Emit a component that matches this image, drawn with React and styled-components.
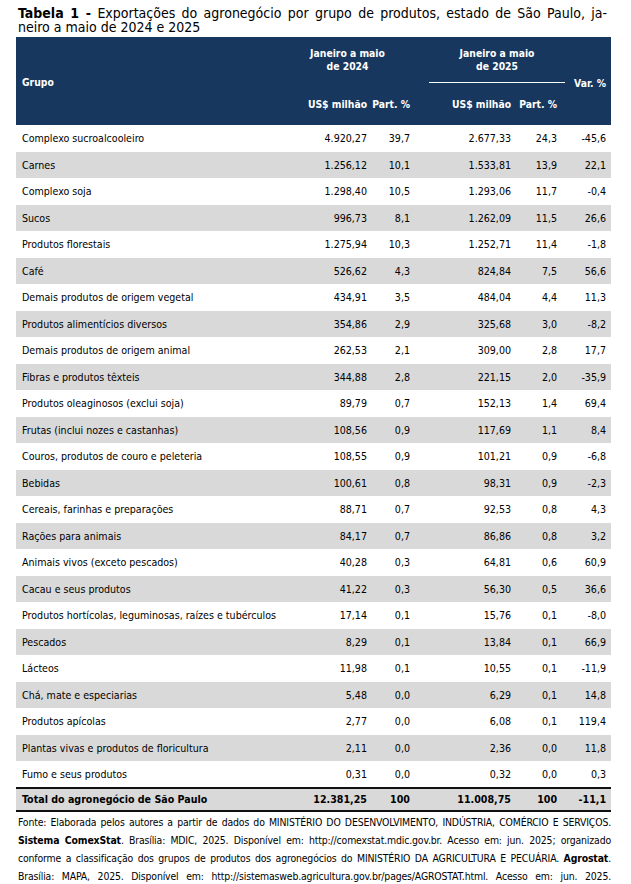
import React from 'react';
import styled, { createGlobalStyle } from 'styled-components';

const FONT = '"DejaVu Sans Condensed", "DejaVu Sans", sans-serif';

const GlobalStyle = createGlobalStyle`
  body {
    margin: 0;
    background: #fff;
    color: #000;
    font-family: ${FONT};
  }
`;

const Page = styled.div`
  width: 631px;
  padding: 6px 20px 0 16px;
  box-sizing: border-box;
`;

const Title = styled.div`
  font-size: 14px;
  line-height: 14px;
  margin: 0 4px 3px 2px;
`;

const TitleLine = styled.div`
  white-space: nowrap;
  text-align: justify;
  text-align-last: ${p => (p.$fill ? 'justify' : 'left')};
`;

const Table = styled.table`
  width: 595px;
  border-collapse: collapse;
  table-layout: fixed;
  font-size: 10.6px;
`;

const HeadCell = styled.th`
  background: #17375e;
  color: #fff;
  font-weight: bold;
  font-size: 10.3px;
  line-height: 13px;
  text-align: ${p => p.$align || 'center'};
  vertical-align: ${p => p.$valign || 'top'};
  padding: ${p => p.$pad || '0'};
  white-space: nowrap;
`;

const UnderLine = styled.div`
  margin-top: 9px;
  border-bottom: 1px solid #fff;
`;

const Row = styled.tr`
  height: 26.5px;
  background: ${p => (p.$shade ? '#d9d9d9' : '#fff')};
`;

const TotalRow = styled.tr`
  height: 23px;
  background: #d9d9d9;
  font-weight: bold;
  border-top: 2px solid #111;
  border-bottom: 2px solid #111;
`;

const Cell = styled.td`
  padding: 0 ${p => p.$pr || 0}px 0 ${p => p.$pl || 0}px;
  text-align: ${p => p.$align || 'right'};
  white-space: nowrap;
  vertical-align: middle;
`;

const Source = styled.div`
  font-size: 10.4px;
  letter-spacing: -0.15px;
  line-height: 18px;
  margin: 1px 0 0 2px;
`;

const SourceLine = styled.div`
  white-space: nowrap;
  text-align: justify;
  text-align-last: justify;
`;

const rows = [
  ['Complexo sucroalcooleiro', '4.920,27', '39,7', '2.677,33', '24,3', '-45,6'],
  ['Carnes', '1.256,12', '10,1', '1.533,81', '13,9', '22,1'],
  ['Complexo soja', '1.298,40', '10,5', '1.293,06', '11,7', '-0,4'],
  ['Sucos', '996,73', '8,1', '1.262,09', '11,5', '26,6'],
  ['Produtos florestais', '1.275,94', '10,3', '1.252,71', '11,4', '-1,8'],
  ['Café', '526,62', '4,3', '824,84', '7,5', '56,6'],
  ['Demais produtos de origem vegetal', '434,91', '3,5', '484,04', '4,4', '11,3'],
  ['Produtos alimentícios diversos', '354,86', '2,9', '325,68', '3,0', '-8,2'],
  ['Demais produtos de origem animal', '262,53', '2,1', '309,00', '2,8', '17,7'],
  ['Fibras e produtos têxteis', '344,88', '2,8', '221,15', '2,0', '-35,9'],
  ['Produtos oleaginosos (exclui soja)', '89,79', '0,7', '152,13', '1,4', '69,4'],
  ['Frutas (inclui nozes e castanhas)', '108,56', '0,9', '117,69', '1,1', '8,4'],
  ['Couros, produtos de couro e peleteria', '108,55', '0,9', '101,21', '0,9', '-6,8'],
  ['Bebidas', '100,61', '0,8', '98,31', '0,9', '-2,3'],
  ['Cereais, farinhas e preparações', '88,71', '0,7', '92,53', '0,8', '4,3'],
  ['Rações para animais', '84,17', '0,7', '86,86', '0,8', '3,2'],
  ['Animais vivos (exceto pescados)', '40,28', '0,3', '64,81', '0,6', '60,9'],
  ['Cacau e seus produtos', '41,22', '0,3', '56,30', '0,5', '36,6'],
  ['Produtos hortícolas, leguminosas, raízes e tubérculos', '17,14', '0,1', '15,76', '0,1', '-8,0'],
  ['Pescados', '8,29', '0,1', '13,84', '0,1', '66,9'],
  ['Lácteos', '11,98', '0,1', '10,55', '0,1', '-11,9'],
  ['Chá, mate e especiarias', '5,48', '0,0', '6,29', '0,1', '14,8'],
  ['Produtos apícolas', '2,77', '0,0', '6,08', '0,1', '119,4'],
  ['Plantas vivas e produtos de floricultura', '2,11', '0,0', '2,36', '0,0', '11,8'],
  ['Fumo e seus produtos', '0,31', '0,0', '0,32', '0,0', '0,3']
];

const total = ['Total do agronegócio de São Paulo', '12.381,25', '100', '11.008,75', '100', '-11,1'];

// column widths: grupo | us$ 24 | part 24 | gap | us$ 25 | part 25 | var
const cols = [264, 92, 43, 14, 87, 49, 46];

const DataCells = ({ values }) => (
  <>
    <Cell $align="left" $pl={6}>{values[0]}</Cell>
    <Cell $pr={5}>{values[1]}</Cell>
    <Cell $pr={5}>{values[2]}</Cell>
    <Cell />
    <Cell $pr={5}>{values[3]}</Cell>
    <Cell $pr={8}>{values[4]}</Cell>
    <Cell $pr={5}>{values[5]}</Cell>
  </>
);

export default function App() {
  return (
    <Page>
      <GlobalStyle />
      <Title>
        <TitleLine $fill>
          <b>Tabela 1 -</b> Exportações do agronegócio por grupo de produtos, estado de São Paulo, ja-
        </TitleLine>
        <TitleLine>neiro a maio de 2024 e 2025</TitleLine>
      </Title>

      <Table>
        <colgroup>
          {cols.map((w, i) => (
            <col key={i} style={{ width: w }} />
          ))}
        </colgroup>
        <thead>
          <tr>
            <HeadCell rowSpan={2} $align="left" $valign="middle" $pad="3px 0 0 6px">
              Grupo
            </HeadCell>
            <HeadCell colSpan={2} $pad="10px 0 0">
              Janeiro a maio
              <br />
              de 2024
            </HeadCell>
            <HeadCell $pad="0" />
            <HeadCell colSpan={2} $pad="10px 0 0">
              Janeiro a maio
              <br />
              de 2025
              <UnderLine />
            </HeadCell>
            <HeadCell rowSpan={2} $align="right" $valign="middle" $pad="5px 5px 0 0">
              Var. %
            </HeadCell>
          </tr>
          <tr>
            <HeadCell $align="right" $pad="15px 5px 14px 0">US$ milhão</HeadCell>
            <HeadCell $align="right" $pad="15px 5px 14px 0">Part. %</HeadCell>
            <HeadCell />
            <HeadCell $align="right" $pad="15px 5px 14px 0">US$ milhão</HeadCell>
            <HeadCell $align="right" $pad="15px 8px 14px 0">Part. %</HeadCell>
          </tr>
        </thead>
        <tbody>
          {rows.map((r, i) => (
            <Row key={r[0]} $shade={i % 2 === 1}>
              <DataCells values={r} />
            </Row>
          ))}
          <TotalRow>
            <DataCells values={total} />
          </TotalRow>
        </tbody>
      </Table>

      <Source>
        <SourceLine>
          Fonte: Elaborada pelos autores a partir de dados do MINISTÉRIO DO DESENVOLVIMENTO, INDÚSTRIA, COMÉRCIO E SERVIÇOS.
        </SourceLine>
        <SourceLine>
          <b>Sistema ComexStat</b>. Brasília: MDIC, 2025. Disponível em: http://comexstat.mdic.gov.br. Acesso em: jun. 2025; organizado
        </SourceLine>
        <SourceLine>
          conforme a classificação dos grupos de produtos dos agronegócios do MINISTÉRIO DA AGRICULTURA E PECUÁRIA. <b>Agrostat</b>.
        </SourceLine>
        <SourceLine>
          Brasília: MAPA, 2025. Disponível em: http://sistemasweb.agricultura.gov.br/pages/AGROSTAT.html. Acesso em: jun. 2025.
        </SourceLine>
      </Source>
    </Page>
  );
}
